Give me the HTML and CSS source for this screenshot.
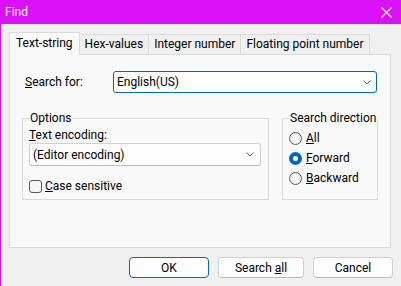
FILE: index.html
```html
<!DOCTYPE html>
<html lang="en">
<head>
    <title>Find</title>
    <meta name="viewport" content="width=device-width, initial-scale=1">
    <link rel="stylesheet" href="styles.css">
</head>
<body>
<div class="window">
    <div class="titlebar">
        <span class="title">Find</span>
        <svg class="close" width="11" height="11" viewBox="0 0 11 11">
            <path d="M0.5 0.5L10.5 10.5M10.5 0.5L0.5 10.5" stroke="#fff" stroke-width="1.1" fill="none"/>
        </svg>
    </div>
    <div class="content">
        <div class="tabs">
            <div class="tab active">Text-string</div>
            <div class="tab">Hex-values</div>
            <div class="tab">Integer number</div>
            <div class="tab">Floating point number</div>
        </div>
        <div class="panel">
            <div class="search-row">
                <label class="search-label"><u>S</u>earch for:</label>
                <div class="combo focused">
                    <span>English(US)</span>
                    <svg class="chevron" width="8" height="5" viewBox="0 0 8 5">
                        <polyline points="0.5,0.5 4,4 7.5,0.5" fill="none" stroke="#606060" stroke-width="1"/>
                    </svg>
                </div>
            </div>
            <div class="groups">
                <fieldset class="group options">
                    <legend>Options</legend>
                    <div class="field-label"><u>T</u>ext encoding:</div>
                    <div class="combo encoding">
                        <span>(Editor encoding)</span>
                        <svg class="chevron" width="8" height="5" viewBox="0 0 8 5">
                            <polyline points="0.5,0.5 4,4 7.5,0.5" fill="none" stroke="#606060" stroke-width="1"/>
                        </svg>
                    </div>
                    <div class="check"><span class="box"></span><span><u>C</u>ase sensitive</span></div>
                </fieldset>
                <fieldset class="group direction">
                    <legend>Search direction</legend>
                    <div class="radio"><span class="dot"></span><span><u>A</u>ll</span></div>
                    <div class="radio"><span class="dot checked"></span><span><u>F</u>orward</span></div>
                    <div class="radio"><span class="dot"></span><span><u>B</u>ackward</span></div>
                </fieldset>
            </div>
        </div>
        <div class="buttons">
            <button class="btn default">OK</button>
            <button class="btn wide">Search <u>a</u>ll</button>
            <button class="btn">Cancel</button>
        </div>
    </div>
</div>
</body>
</html>
```

FILE: styles.css
```css
:root {
    --accent: #0067c0;
    --titlebar: #da10f7;
    --window: #f0f0f0;
    --panel: #f9f9f9;
    --line: #dadada;
    --control: #fdfdfd;
    --control-border: #d0d0d0;
    --mark: #5a5a5a;
}

html {
    box-sizing: border-box;
}

*, *:before, *:after {
    box-sizing: inherit;
}

body {
    margin: 0;
    height: 286px;
    overflow: hidden;
    background-color: var(--window);
    color: #000;
    font-family: "Segoe UI", Roboto, "Noto Sans", sans-serif;
    font-size: 12px;
    line-height: 16px;
}

.window {
    height: 286px;
    border-left: 1px solid var(--titlebar);
}

.titlebar {
    height: 24px;
    display: flex;
    align-items: center;
    justify-content: space-between;
    padding: 0 9px 0 4px;
    background-color: var(--titlebar);
    color: #fff;
}

.content {
    padding: 8px 8px 0 8px;
}

/* tab strip */
.tabs {
    display: flex;
    align-items: flex-end;
    height: 22px;
}

.tab {
    height: 20px;
    padding: 0 5px;
    line-height: 18px;
    border: 1px solid var(--line);
    border-left: none;
    border-bottom: none;
    white-space: nowrap;
}

.tab.active {
    position: relative;
    height: 23px;
    margin-bottom: -1px;
    padding: 0 6px;
    line-height: 20px;
    border-left: 1px solid var(--line);
    background-color: var(--panel);
}

.panel {
    height: 194px;
    margin-right: 2px;
    padding: 16px 12px 0 12px;
    border: 1px solid var(--line);
    background-color: var(--panel);
}

.search-row {
    display: flex;
    align-items: center;
}

.search-label {
    width: 88px;
    margin-left: 3px;
}

.combo {
    display: flex;
    align-items: center;
    justify-content: space-between;
    height: 22px;
    width: 264px;
    padding: 0 5px 0 3px;
    background-color: #fff;
    border: 1px solid var(--control-border);
    border-radius: 3px;
}

.combo.focused {
    border-color: var(--accent);
}

.combo.encoding {
    width: 232px;
    height: 23px;
    padding-right: 6px;
    background-color: var(--control);
    border-bottom-color: #bdbdbd;
}

/* group boxes */
.groups {
    display: flex;
    gap: 13px;
    margin-top: 17px;
}

.group {
    margin: 0;
    min-width: 0;
    padding: 0 6px;
    border: 1px solid var(--line);
}

.group legend {
    padding: 0 1px;
    line-height: 16px;
    white-space: nowrap;
}

.options {
    width: 247px;
    padding-bottom: 5px;
}

.direction {
    width: 96px;
    padding-bottom: 2px;
}

.field-label {
    margin-top: 1px;
}

.check {
    display: flex;
    align-items: center;
    margin-top: 12px;
}

.box {
    width: 13px;
    height: 13px;
    margin-right: 3px;
    border: 1px solid var(--mark);
    border-radius: 3px;
    background-color: #f5f5f5;
}

.radio {
    display: flex;
    align-items: center;
    height: 20px;
}

.radio:first-of-type {
    margin-top: 2px;
}

.dot {
    width: 13px;
    height: 13px;
    margin-right: 4px;
    border: 1px solid var(--mark);
    border-radius: 50%;
    background-color: #f5f5f5;
}

.dot.checked {
    border: 4px solid var(--accent);
    background-color: #fff;
}

/* dialog buttons */
.buttons {
    display: flex;
    justify-content: flex-end;
    gap: 9px;
    margin-top: 9px;
}

.btn {
    width: 80px;
    height: 21px;
    padding: 0;
    font: inherit;
    color: #000;
    background-color: var(--control);
    border: 1px solid var(--control-border);
    border-bottom-color: #bcbcbc;
    border-radius: 4px;
}

.btn.wide {
    width: 86px;
}

.btn.default {
    border-color: var(--accent);
}
```
